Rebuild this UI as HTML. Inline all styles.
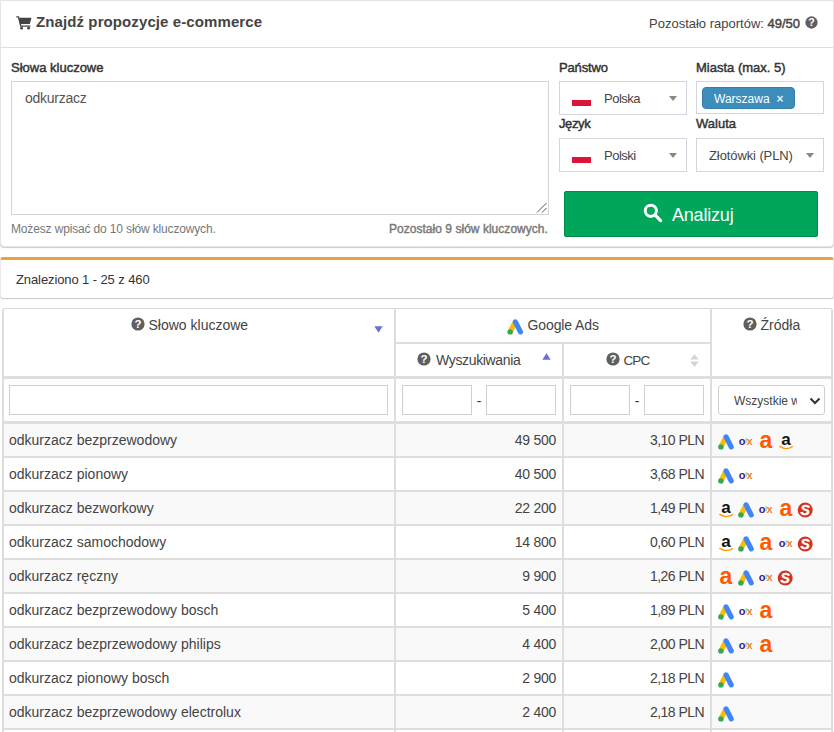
<!DOCTYPE html>
<html lang="pl">
<head>
<meta charset="utf-8">
<title>Znajdź propozycje e-commerce</title>
<style>
*{box-sizing:border-box;}
html,body{margin:0;padding:0;}
body{width:834px;height:732px;overflow:hidden;background:#fff;font-family:"Liberation Sans",sans-serif;font-size:14px;color:#444;position:relative;}
.abs{position:absolute;white-space:nowrap;}
.panel1{position:absolute;left:0;top:0;width:834px;height:247px;border:1px solid #e4e4e4;border-radius:0 0 4px 4px;background:#fff;box-shadow:0 1px 1px rgba(0,0,0,.2);}
.p1head{position:absolute;left:0;top:0;width:832px;height:47px;border-bottom:1px solid #e0e0e0;}
.title{left:36px;top:12px;font-size:15px;font-weight:bold;color:#444;line-height:20px;letter-spacing:.1px;}
.lbl{font-size:13px;color:#333;line-height:16px;-webkit-text-stroke:.45px #333;}
.ta{position:absolute;left:11px;top:81px;width:538px;height:134px;border:1px solid #d4d4d4;background:#fff;}
.help{font-size:12px;color:#777;line-height:14px;}
.sel{position:absolute;height:34px;border:1px solid #d2d6de;background:#fff;}
.sel .txt{position:absolute;top:9px;font-size:13px;color:#444;line-height:16px;}
.flag{position:absolute;left:12px;top:12px;width:19px;height:12px;background:#fff;}
.flag i{position:absolute;left:0;top:6px;width:19px;height:6px;background:#dc143c;}
.caret{position:absolute;top:14px;width:0;height:0;border-left:4px solid transparent;border-right:4px solid transparent;border-top:5px solid #888;}
.tag{position:absolute;left:5px;top:5px;width:93px;height:22px;background:#3c8dbc;border:1px solid #367fa9;border-radius:4px;color:#fff;font-size:12px;line-height:22px;padding-left:11px;}
.btn{position:absolute;left:564px;top:191px;width:254px;height:46px;background:#00a65a;border:1px solid #008d4c;border-radius:2px;color:#fff;font-size:18px;}
.panel2{position:absolute;left:0;top:257px;width:834px;height:41px;border-top:3px solid #e8a33d;border-radius:3px;background:#fff;box-shadow:0 1px 1px rgba(0,0,0,.22);border-left:1px solid #eaeaea;border-right:1px solid #eaeaea}
table{position:absolute;left:2px;top:308px;width:831px;border-collapse:separate;border-spacing:0;table-layout:fixed;font-size:14px;border-left:2px solid #dedede;border-top:1px solid #d8d8d8;border-radius:3px 3px 0 0;}
td,th{border-right:2px solid #dedede;border-bottom:2px solid #dedede;padding:0 7px 1px 5px;height:34px;font-weight:normal;overflow:hidden;white-space:nowrap;color:#444;}
tr.h2 th, th.rs{border-bottom-width:3px;}
tr.h2 th{height:35px;}
tr.h1 th{height:35px;}
tr.f td{height:45px;border-bottom-width:3px;padding:0 0 0 6px;font-size:0;}
tbody tr:nth-child(odd) td{background:#f9f9f9;}
td.n{text-align:right;padding-right:6px;}
.n1{letter-spacing:-.25px;}
.n2{letter-spacing:-.55px;}
td.src{padding:4px 0 0 6px;font-size:0;}
.ic{display:inline-block;width:16px;height:16px;margin-right:4px;vertical-align:top;overflow:visible;}
.fi{display:inline-block;height:30px;border:1px solid #cfcfcf;background:#fff;vertical-align:middle;}
.dash{position:relative;top:1px;display:inline-block;width:14px;text-align:center;font-size:14px;vertical-align:middle;color:#333;}
.hd{font-size:14px;line-height:16px;color:#444;}
</style>
</head>
<body>
<div class="panel1">
  <div class="p1head"></div>
</div>
<svg class="abs" style="left:16px;top:15px" width="16" height="15" viewBox="0 0 16 15"><path d="M0.3 1.2h2.6l0.5 1.6h12.1l-1.7 6.2H5l0.4 1.5h9v1.3H4.2L1.9 2.6H0.3z" fill="#444"/><circle cx="5.6" cy="13.2" r="1.4" fill="#444"/><circle cx="12.6" cy="13.2" r="1.4" fill="#444"/></svg>
<div class="abs title">Znajdź propozycje e-commerce</div>
<div class="abs" style="left:649px;top:16px;font-size:13px;line-height:16px;color:#444">Pozostało raportów: <span style="-webkit-text-stroke:.45px #444">49/50</span></div>
<svg class="abs" style="left:805px;top:16px" width="13" height="13" viewBox="0 0 14 14"><circle cx="7" cy="7" r="6.6" fill="#5f5f5f"/><text x="7" y="11" text-anchor="middle" font-family="Liberation Sans, sans-serif" font-weight="bold" font-size="11.5" fill="#fff">?</text></svg>
<div class="abs lbl" style="left:11px;top:60px">Słowa kluczowe</div>
<div class="ta"><div class="abs" style="left:13px;top:8px;font-size:14px;color:#555;line-height:16px;letter-spacing:-.25px">odkurzacz</div>
<svg class="abs" style="right:1px;bottom:1px" width="11" height="11" viewBox="0 0 11 11"><path d="M10.5 1 L1 10.5 M10.5 6 L6 10.5" stroke="#555" stroke-width="1" fill="none"/></svg></div>
<div class="abs help" style="left:11px;top:222px;letter-spacing:-.15px">Możesz wpisać do 10 słów kluczowych.</div>
<div class="abs help" style="left:389px;top:222px;-webkit-text-stroke:.4px #777;letter-spacing:.03px">Pozostało 9 słów kluczowych.</div>

<div class="abs lbl" style="left:559px;top:60px;letter-spacing:-.15px">Państwo</div>
<div class="abs lbl" style="left:696px;top:60px">Miasta (max. 5)</div>
<div class="sel" style="left:559px;top:81px;width:128px"><span class="flag"><i></i></span><span class="txt" style="left:44px;letter-spacing:-.5px">Polska</span><span class="caret" style="left:109px"></span></div>
<div class="sel" style="left:696px;top:81px;width:128px;height:33px"><div class="tag">Warszawa<span style="font-size:12px;opacity:.85;margin-left:7px;font-weight:bold">×</span></div></div>
<div class="abs lbl" style="left:559px;top:116px;letter-spacing:-.4px">Język</div>
<div class="abs lbl" style="left:696px;top:116px">Waluta</div>
<div class="sel" style="left:559px;top:138px;width:128px"><span class="flag"><i></i></span><span class="txt" style="left:44px;letter-spacing:-.5px">Polski</span><span class="caret" style="left:109px"></span></div>
<div class="sel" style="left:696px;top:138px;width:128px"><span class="txt" style="left:12px;letter-spacing:-.1px">Złotówki (PLN)</span><span class="caret" style="left:109px"></span></div>
<div class="btn"><svg class="abs" style="left:78px;top:11px" width="20" height="20" viewBox="0 0 20 20"><circle cx="7.8" cy="7.8" r="5.6" fill="none" stroke="#fff" stroke-width="3"/><path d="M12.2 12.2 L17.6 17.6" stroke="#fff" stroke-width="3.2" stroke-linecap="round"/></svg><span class="abs" style="left:107px;top:12px;line-height:22px;letter-spacing:-.2px">Analizuj</span></div>

<div class="panel2"><div class="abs" style="left:15px;top:12px;font-size:13px;line-height:16px;color:#333;letter-spacing:-.1px">Znaleziono 1 - 25 z 460</div></div>

<table>
<colgroup><col style="width:392px"><col style="width:168px"><col style="width:148px"><col style="width:121px"></colgroup>
<thead>
<tr class="h1"><th rowspan="2" class="rs"></th><th colspan="2"></th><th rowspan="2" class="rs"></th></tr>
<tr class="h2"><th></th><th></th></tr>
<tr class="f"><td><span class="fi" style="width:379px;margin-left:-1px"></span></td><td><span class="fi" style="width:70px"></span><span class="dash">-</span><span class="fi" style="width:70px"></span></td><td><span class="fi" style="width:60px"></span><span class="dash">-</span><span class="fi" style="width:60px"></span></td><td><span class="fi" style="width:107px;border-radius:3px;position:relative;overflow:hidden"><span class="abs" style="left:15px;top:8px;font-size:12px;line-height:14px;color:#444;width:63px;overflow:hidden">Wszystkie w</span><svg class="abs" style="left:90px;top:11px" width="12" height="8" viewBox="0 0 12 8"><path d="M1.5 1.5 L6 6 L10.5 1.5" fill="none" stroke="#333" stroke-width="2"/></svg></span></td></tr>
</thead>
<tbody>
<tr><td>odkurzacz bezprzewodowy</td><td class="n"><span class="n1">49 500</span></td><td class="n"><span class="n2">3,10 PLN</span></td><td class="src"><svg class="ic" viewBox="0 0 16 16"><line x1="7" y1="4.8" x2="3.1" y2="12.7" stroke="#fbbc04" stroke-width="5.2" stroke-linecap="round"/><line x1="8.1" y1="2.9" x2="13.2" y2="12.9" stroke="#4285f4" stroke-width="5.2" stroke-linecap="round"/><circle cx="2.9" cy="12.9" r="2.7" fill="#34a853"/></svg><svg class="ic" viewBox="0 0 16 16"><text x="0.8" y="11.2" font-family="Liberation Sans, sans-serif" font-weight="bold" font-size="11" letter-spacing="-0.4"><tspan fill="#3a1a8c">o</tspan><tspan fill="#8fce3c" font-size="6.5" dy="-2">l</tspan><tspan fill="#f0802a" dy="2">x</tspan></text></svg><svg class="ic" viewBox="0 0 16 16"><text x="8" y="14.3" text-anchor="middle" font-family="Liberation Sans, sans-serif" font-weight="bold" font-size="23" fill="#ff5a00">a</text></svg><svg class="ic" viewBox="0 0 16 16"><text x="8" y="11" text-anchor="middle" font-family="Liberation Sans, sans-serif" font-weight="bold" font-size="17" fill="#111">a</text><path d="M1.8 12.4 Q8 16.6 14.4 12.6" fill="none" stroke="#f90" stroke-width="1.3" stroke-linecap="round"/></svg></td></tr>
<tr><td>odkurzacz pionowy</td><td class="n"><span class="n1">40 500</span></td><td class="n"><span class="n2">3,68 PLN</span></td><td class="src"><svg class="ic" viewBox="0 0 16 16"><line x1="7" y1="4.8" x2="3.1" y2="12.7" stroke="#fbbc04" stroke-width="5.2" stroke-linecap="round"/><line x1="8.1" y1="2.9" x2="13.2" y2="12.9" stroke="#4285f4" stroke-width="5.2" stroke-linecap="round"/><circle cx="2.9" cy="12.9" r="2.7" fill="#34a853"/></svg><svg class="ic" viewBox="0 0 16 16"><text x="0.8" y="11.2" font-family="Liberation Sans, sans-serif" font-weight="bold" font-size="11" letter-spacing="-0.4"><tspan fill="#3a1a8c">o</tspan><tspan fill="#8fce3c" font-size="6.5" dy="-2">l</tspan><tspan fill="#f0802a" dy="2">x</tspan></text></svg></td></tr>
<tr><td>odkurzacz bezworkowy</td><td class="n"><span class="n1">22 200</span></td><td class="n"><span class="n2">1,49 PLN</span></td><td class="src"><svg class="ic" viewBox="0 0 16 16"><text x="8" y="11" text-anchor="middle" font-family="Liberation Sans, sans-serif" font-weight="bold" font-size="17" fill="#111">a</text><path d="M1.8 12.4 Q8 16.6 14.4 12.6" fill="none" stroke="#f90" stroke-width="1.3" stroke-linecap="round"/></svg><svg class="ic" viewBox="0 0 16 16"><line x1="7" y1="4.8" x2="3.1" y2="12.7" stroke="#fbbc04" stroke-width="5.2" stroke-linecap="round"/><line x1="8.1" y1="2.9" x2="13.2" y2="12.9" stroke="#4285f4" stroke-width="5.2" stroke-linecap="round"/><circle cx="2.9" cy="12.9" r="2.7" fill="#34a853"/></svg><svg class="ic" viewBox="0 0 16 16"><text x="0.8" y="11.2" font-family="Liberation Sans, sans-serif" font-weight="bold" font-size="11" letter-spacing="-0.4"><tspan fill="#3a1a8c">o</tspan><tspan fill="#8fce3c" font-size="6.5" dy="-2">l</tspan><tspan fill="#f0802a" dy="2">x</tspan></text></svg><svg class="ic" viewBox="0 0 16 16"><text x="8" y="14.3" text-anchor="middle" font-family="Liberation Sans, sans-serif" font-weight="bold" font-size="23" fill="#ff5a00">a</text></svg><svg class="ic" viewBox="0 0 16 16"><circle cx="7.2" cy="8" r="7.5" fill="#d23321"/><text x="7.2" y="13" text-anchor="middle" font-family="Liberation Sans, sans-serif" font-weight="bold" font-style="italic" font-size="14" fill="#fff" stroke="#fff" stroke-width=".4">S</text></svg></td></tr>
<tr><td>odkurzacz samochodowy</td><td class="n"><span class="n1">14 800</span></td><td class="n"><span class="n2">0,60 PLN</span></td><td class="src"><svg class="ic" viewBox="0 0 16 16"><text x="8" y="11" text-anchor="middle" font-family="Liberation Sans, sans-serif" font-weight="bold" font-size="17" fill="#111">a</text><path d="M1.8 12.4 Q8 16.6 14.4 12.6" fill="none" stroke="#f90" stroke-width="1.3" stroke-linecap="round"/></svg><svg class="ic" viewBox="0 0 16 16"><line x1="7" y1="4.8" x2="3.1" y2="12.7" stroke="#fbbc04" stroke-width="5.2" stroke-linecap="round"/><line x1="8.1" y1="2.9" x2="13.2" y2="12.9" stroke="#4285f4" stroke-width="5.2" stroke-linecap="round"/><circle cx="2.9" cy="12.9" r="2.7" fill="#34a853"/></svg><svg class="ic" viewBox="0 0 16 16"><text x="8" y="14.3" text-anchor="middle" font-family="Liberation Sans, sans-serif" font-weight="bold" font-size="23" fill="#ff5a00">a</text></svg><svg class="ic" viewBox="0 0 16 16"><text x="0.8" y="11.2" font-family="Liberation Sans, sans-serif" font-weight="bold" font-size="11" letter-spacing="-0.4"><tspan fill="#3a1a8c">o</tspan><tspan fill="#8fce3c" font-size="6.5" dy="-2">l</tspan><tspan fill="#f0802a" dy="2">x</tspan></text></svg><svg class="ic" viewBox="0 0 16 16"><circle cx="7.2" cy="8" r="7.5" fill="#d23321"/><text x="7.2" y="13" text-anchor="middle" font-family="Liberation Sans, sans-serif" font-weight="bold" font-style="italic" font-size="14" fill="#fff" stroke="#fff" stroke-width=".4">S</text></svg></td></tr>
<tr><td>odkurzacz ręczny</td><td class="n"><span class="n1">9 900</span></td><td class="n"><span class="n2">1,26 PLN</span></td><td class="src"><svg class="ic" viewBox="0 0 16 16"><text x="8" y="14.3" text-anchor="middle" font-family="Liberation Sans, sans-serif" font-weight="bold" font-size="23" fill="#ff5a00">a</text></svg><svg class="ic" viewBox="0 0 16 16"><line x1="7" y1="4.8" x2="3.1" y2="12.7" stroke="#fbbc04" stroke-width="5.2" stroke-linecap="round"/><line x1="8.1" y1="2.9" x2="13.2" y2="12.9" stroke="#4285f4" stroke-width="5.2" stroke-linecap="round"/><circle cx="2.9" cy="12.9" r="2.7" fill="#34a853"/></svg><svg class="ic" viewBox="0 0 16 16"><text x="0.8" y="11.2" font-family="Liberation Sans, sans-serif" font-weight="bold" font-size="11" letter-spacing="-0.4"><tspan fill="#3a1a8c">o</tspan><tspan fill="#8fce3c" font-size="6.5" dy="-2">l</tspan><tspan fill="#f0802a" dy="2">x</tspan></text></svg><svg class="ic" viewBox="0 0 16 16"><circle cx="7.2" cy="8" r="7.5" fill="#d23321"/><text x="7.2" y="13" text-anchor="middle" font-family="Liberation Sans, sans-serif" font-weight="bold" font-style="italic" font-size="14" fill="#fff" stroke="#fff" stroke-width=".4">S</text></svg></td></tr>
<tr><td>odkurzacz bezprzewodowy bosch</td><td class="n"><span class="n1">5 400</span></td><td class="n"><span class="n2">1,89 PLN</span></td><td class="src"><svg class="ic" viewBox="0 0 16 16"><line x1="7" y1="4.8" x2="3.1" y2="12.7" stroke="#fbbc04" stroke-width="5.2" stroke-linecap="round"/><line x1="8.1" y1="2.9" x2="13.2" y2="12.9" stroke="#4285f4" stroke-width="5.2" stroke-linecap="round"/><circle cx="2.9" cy="12.9" r="2.7" fill="#34a853"/></svg><svg class="ic" viewBox="0 0 16 16"><text x="0.8" y="11.2" font-family="Liberation Sans, sans-serif" font-weight="bold" font-size="11" letter-spacing="-0.4"><tspan fill="#3a1a8c">o</tspan><tspan fill="#8fce3c" font-size="6.5" dy="-2">l</tspan><tspan fill="#f0802a" dy="2">x</tspan></text></svg><svg class="ic" viewBox="0 0 16 16"><text x="8" y="14.3" text-anchor="middle" font-family="Liberation Sans, sans-serif" font-weight="bold" font-size="23" fill="#ff5a00">a</text></svg></td></tr>
<tr><td>odkurzacz bezprzewodowy philips</td><td class="n"><span class="n1">4 400</span></td><td class="n"><span class="n2">2,00 PLN</span></td><td class="src"><svg class="ic" viewBox="0 0 16 16"><line x1="7" y1="4.8" x2="3.1" y2="12.7" stroke="#fbbc04" stroke-width="5.2" stroke-linecap="round"/><line x1="8.1" y1="2.9" x2="13.2" y2="12.9" stroke="#4285f4" stroke-width="5.2" stroke-linecap="round"/><circle cx="2.9" cy="12.9" r="2.7" fill="#34a853"/></svg><svg class="ic" viewBox="0 0 16 16"><text x="0.8" y="11.2" font-family="Liberation Sans, sans-serif" font-weight="bold" font-size="11" letter-spacing="-0.4"><tspan fill="#3a1a8c">o</tspan><tspan fill="#8fce3c" font-size="6.5" dy="-2">l</tspan><tspan fill="#f0802a" dy="2">x</tspan></text></svg><svg class="ic" viewBox="0 0 16 16"><text x="8" y="14.3" text-anchor="middle" font-family="Liberation Sans, sans-serif" font-weight="bold" font-size="23" fill="#ff5a00">a</text></svg></td></tr>
<tr><td>odkurzacz pionowy bosch</td><td class="n"><span class="n1">2 900</span></td><td class="n"><span class="n2">2,18 PLN</span></td><td class="src"><svg class="ic" viewBox="0 0 16 16"><line x1="7" y1="4.8" x2="3.1" y2="12.7" stroke="#fbbc04" stroke-width="5.2" stroke-linecap="round"/><line x1="8.1" y1="2.9" x2="13.2" y2="12.9" stroke="#4285f4" stroke-width="5.2" stroke-linecap="round"/><circle cx="2.9" cy="12.9" r="2.7" fill="#34a853"/></svg></td></tr>
<tr><td>odkurzacz bezprzewodowy electrolux</td><td class="n"><span class="n1">2 400</span></td><td class="n"><span class="n2">2,18 PLN</span></td><td class="src"><svg class="ic" viewBox="0 0 16 16"><line x1="7" y1="4.8" x2="3.1" y2="12.7" stroke="#fbbc04" stroke-width="5.2" stroke-linecap="round"/><line x1="8.1" y1="2.9" x2="13.2" y2="12.9" stroke="#4285f4" stroke-width="5.2" stroke-linecap="round"/><circle cx="2.9" cy="12.9" r="2.7" fill="#34a853"/></svg></td></tr>
<tr><td>&nbsp;</td><td></td><td></td><td></td></tr>
</tbody>
</table>

<svg class="abs" style="left:131px;top:317px" width="14" height="14" viewBox="0 0 14 14"><circle cx="7" cy="7" r="6.6" fill="#5f5f5f"/><text x="7" y="11" text-anchor="middle" font-family="Liberation Sans, sans-serif" font-weight="bold" font-size="11.5" fill="#fff">?</text></svg>
<div class="abs hd" style="left:148.5px;top:317px">Słowo kluczowe</div>
<svg class="abs" style="left:374px;top:326px" width="9" height="7" viewBox="0 0 9 7"><path d="M0.3 0.3h8.4L4.5 6.8z" fill="#6b6fd6"/></svg>
<span class="abs" style="left:506.5px;top:319px;width:16.5px;height:16px;font-size:0"><svg width="16.5" height="16" viewBox="0 0 16 16"><line x1="7" y1="4.8" x2="3.1" y2="12.7" stroke="#fbbc04" stroke-width="5.2" stroke-linecap="round"/><line x1="8.1" y1="2.9" x2="13.2" y2="12.9" stroke="#4285f4" stroke-width="5.2" stroke-linecap="round"/><circle cx="2.9" cy="12.9" r="2.7" fill="#34a853"/></svg></span>
<div class="abs hd" style="left:527.5px;top:317px;letter-spacing:-.1px">Google Ads</div>
<svg class="abs" style="left:743px;top:317px" width="14" height="14" viewBox="0 0 14 14"><circle cx="7" cy="7" r="6.6" fill="#5f5f5f"/><text x="7" y="11" text-anchor="middle" font-family="Liberation Sans, sans-serif" font-weight="bold" font-size="11.5" fill="#fff">?</text></svg>
<div class="abs hd" style="left:760.5px;top:317px">Źródła</div>
<svg class="abs" style="left:417px;top:352px" width="14" height="14" viewBox="0 0 14 14"><circle cx="7" cy="7" r="6.6" fill="#5f5f5f"/><text x="7" y="11" text-anchor="middle" font-family="Liberation Sans, sans-serif" font-weight="bold" font-size="11.5" fill="#fff">?</text></svg>
<div class="abs hd" style="left:436px;top:352px;letter-spacing:-.35px">Wyszukiwania</div>
<svg class="abs" style="left:542px;top:353px" width="9" height="7" viewBox="0 0 9 7"><path d="M0.3 6.7h8.4L4.5 0.2z" fill="#6b6fd6"/></svg>
<svg class="abs" style="left:605.5px;top:352px" width="14" height="14" viewBox="0 0 14 14"><circle cx="7" cy="7" r="6.6" fill="#5f5f5f"/><text x="7" y="11" text-anchor="middle" font-family="Liberation Sans, sans-serif" font-weight="bold" font-size="11.5" fill="#fff">?</text></svg>
<div class="abs hd" style="left:623.5px;top:353px;font-size:13.5px;letter-spacing:-.9px">CPC</div>
<svg class="abs" style="left:690px;top:354px" width="9" height="14" viewBox="0 0 9 14"><path d="M0.3 5.6h8.4L4.5 0.2z M0.3 7.6h8.4L4.5 13z" fill="#d4d4d4"/></svg>
</body>
</html>
